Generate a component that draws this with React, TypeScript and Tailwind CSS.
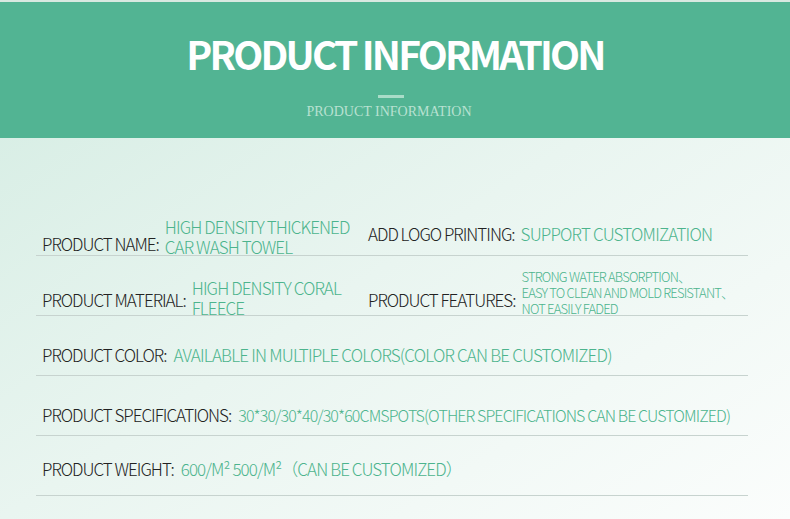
const font = { fontFamily: '"Noto Sans CJK SC", "Noto Sans", sans-serif' };

function Label({ children }: { children: React.ReactNode }) {
  return (
    <span className="text-[17px] leading-[20px] font-light text-[#222] tracking-[-1px] whitespace-nowrap">
      {children}
    </span>
  );
}

export default function App() {
  return (
    <div
      className="w-[790px] h-[519px] overflow-hidden bg-gradient-to-br from-[#d3ece2] via-[#e9f5f0] to-[#fbfdfc]"
      style={font}
    >
      <header className="h-[138px] bg-[#52b493] border-t-2 border-[#d8e9e1] flex flex-col items-center">
        <h1 className="mt-[32px] text-[39px] font-bold leading-none text-white tracking-[-2.8px]">
          PRODUCT INFORMATION
        </h1>
        <div className="mt-[22px] mr-[8px] w-[26px] h-[3px] bg-[#a9dcc8]" />
        <p
          className="mt-[6px] mr-[12px] text-[14px] leading-[16px] text-[#b8e1d1]"
          style={{ fontFamily: '"Liberation Serif", serif' }}
        >
          PRODUCT INFORMATION
        </p>
      </header>

      <div className="pl-[36px] pr-[42px] pt-[58px]">
        {/* row 1 */}
        <div className="h-[60px] border-b border-[#c7d3cf] flex items-start">
          <div className="w-[332px] flex items-start pl-[6px]">
            <div className="mt-[36px]"><Label>PRODUCT NAME:</Label></div>
            <div className="mt-[21px] ml-[6px] text-[17px] leading-[20px] font-light text-[#4cb48d] tracking-[-0.9px]">
              HIGH DENSITY THICKENED<br />CAR WASH TOWEL
            </div>
          </div>
          <div className="flex items-start mt-[28px]">
            <Label>ADD LOGO PRINTING:</Label>
            <span className="ml-[6px] text-[17px] leading-[20px] font-light text-[#4cb48d] tracking-[-0.8px]">
              SUPPORT CUSTOMIZATION
            </span>
          </div>
        </div>

        {/* row 2 */}
        <div className="h-[60px] border-b border-[#c7d3cf] flex items-start">
          <div className="w-[332px] flex items-start pl-[6px]">
            <div className="mt-[32px]"><Label>PRODUCT MATERIAL:</Label></div>
            <div className="mt-[22px] ml-[6px] text-[17px] leading-[20px] font-light text-[#4cb48d] tracking-[-0.9px]">
              HIGH DENSITY CORAL<br />FLEECE
            </div>
          </div>
          <div className="flex items-start">
            <div className="mt-[32px]"><Label>PRODUCT FEATURES:</Label></div>
            <div className="mt-[13px] ml-[6px] text-[13px] leading-[16px] font-light text-[#4cb48d] tracking-[-0.8px]">
              STRONG WATER ABSORPTION、<br />
              EASY TO CLEAN AND MOLD RESISTANT、<br />
              NOT EASILY FADED
            </div>
          </div>
        </div>

        {/* row 3 */}
        <div className="h-[60px] border-b border-[#c7d3cf] flex items-start pl-[6px]">
          <div className="mt-[29px] flex items-start">
            <Label>PRODUCT COLOR:</Label>
            <span className="ml-[7px] text-[17px] leading-[20px] font-light text-[#4cb48d] tracking-[-0.8px] whitespace-nowrap">
              AVAILABLE IN MULTIPLE COLORS(COLOR CAN BE CUSTOMIZED)
            </span>
          </div>
        </div>

        {/* row 4 */}
        <div className="h-[60px] border-b border-[#c7d3cf] flex items-start pl-[6px]">
          <div className="mt-[29px] flex items-start">
            <Label>PRODUCT SPECIFICATIONS:</Label>
            <span className="ml-[7px] text-[16px] leading-[20px] font-light text-[#4cb48d] tracking-[-0.9px] whitespace-nowrap">
              30*30/30*40/30*60CMSPOTS(OTHER SPECIFICATIONS CAN BE CUSTOMIZED)
            </span>
          </div>
        </div>

        {/* row 5 */}
        <div className="h-[60px] border-b border-[#c7d3cf] flex items-start pl-[6px]">
          <div className="mt-[23px] flex items-start">
            <Label>PRODUCT WEIGHT:</Label>
            <span className="ml-[7px] text-[17px] leading-[20px] font-light text-[#4cb48d] tracking-[-0.9px] whitespace-nowrap">
              600/M² 500/M²（CAN BE CUSTOMIZED）
            </span>
          </div>
        </div>
      </div>
    </div>
  );
}
